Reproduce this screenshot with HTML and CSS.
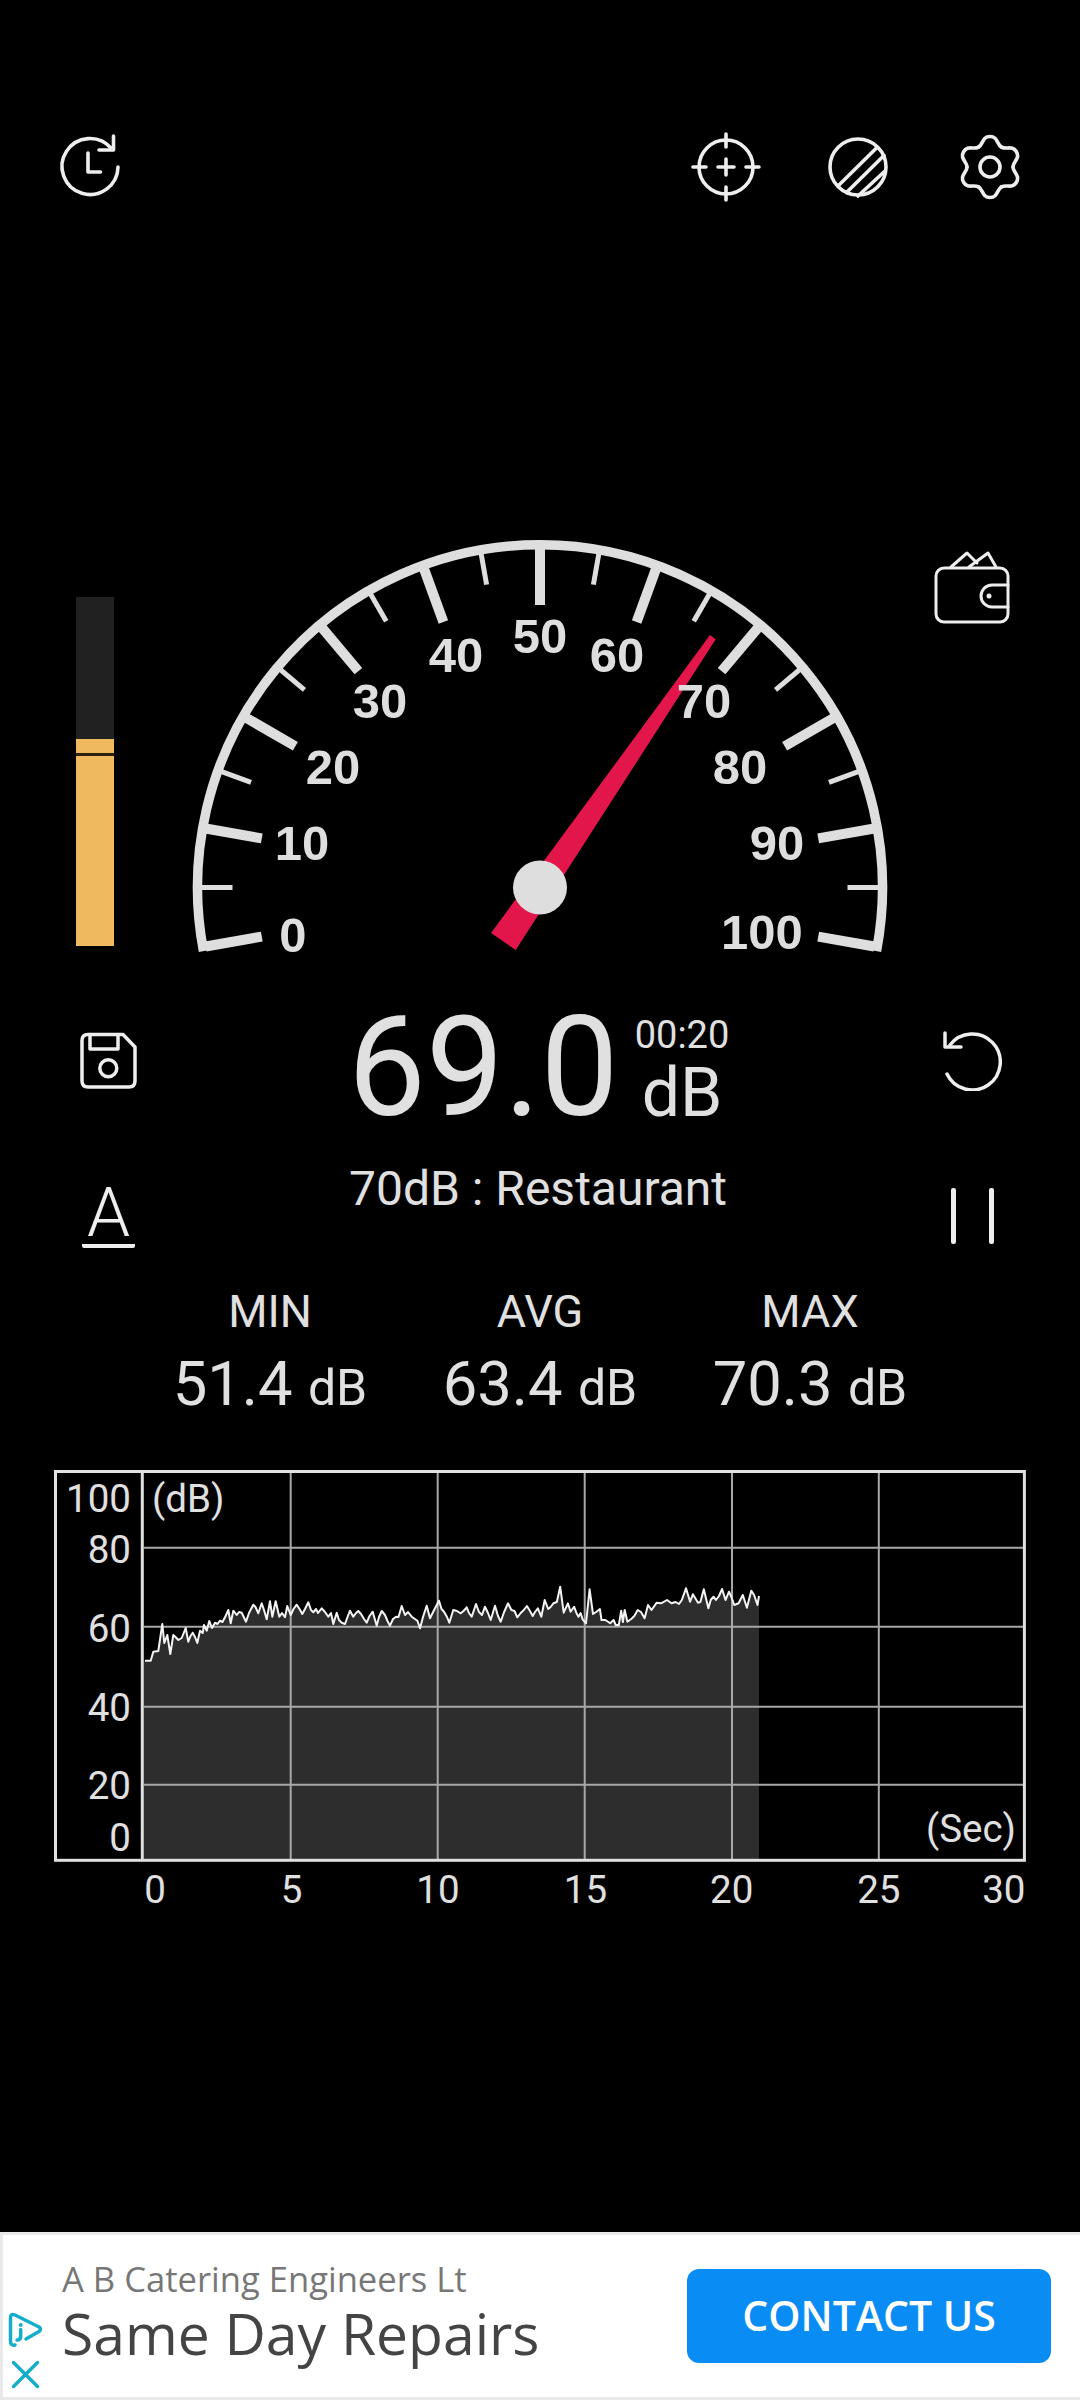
FILE: index.html
```html
<!DOCTYPE html>
<html>

<head>
    <title>Sound Meter</title>
    <meta charset='utf-8'>
    <link rel="stylesheet" href="styles.css">
</head>

<body>
    <div class='screen'>

        <!-- top icons -->
        <div class='topbar'>
            <svg class='icon' viewBox='-35 -35 70 70'>
                <path d='M21 -19 A28 28 0 1 0 28 0' />
                <path d='M23.500 -31 V-17 H9' />
                <path d='M-2 -14 V5 H10.500' />
            </svg>
            <div class='topbar-right'>
                <svg class='icon' viewBox='-35 -35 70 70'>
                    <circle cx='0' cy='0' r='27' />
                    <path d='M0 -33 V-20 M0 20 V33 M-33 0 H-20 M20 0 H33 M-8 0 H8 M0 -8 V8' />
                </svg>
                <svg class='icon' viewBox='-35 -35 70 70'>
                    <circle cx='0' cy='0' r='28' />
                    <path d='M-20 19 L18.500 -19 M-11.500 25.500 L26 -11.500 M0 29 L27 4' />
                </svg>
                <svg class='icon' viewBox='-35 -35 70 70'>
                    <defs>
                        <path id='lobe' d='M-11.500 -19.900 C-6.500 -22.800 -8 -30.500 0 -30.500 S6.500 -22.800 11.500 -19.900' />
                    </defs>
                    <use href='#lobe' />
                    <use href='#lobe' transform='rotate(60)' />
                    <use href='#lobe' transform='rotate(120)' />
                    <use href='#lobe' transform='rotate(180)' />
                    <use href='#lobe' transform='rotate(240)' />
                    <use href='#lobe' transform='rotate(300)' />
                    <circle cx='0' cy='0' r='10' />
                </svg>
            </div>
        </div>

        <!-- level bar, gauge, wallet -->
        <div class='meter'>
            <div class='level'>
                <div class='level-fill'>
                    <div class='level-peak'></div>
                </div>
            </div>

            <svg class='gauge' viewBox='180 530 720 440'>
                <path class='gauge-arc' d='M203.500 951.100 A342.500 342.500 0 1 1 876.500 951.100' />

                <g class='tick-major'>
                    <line x1='540' y1='605' x2='540' y2='548' transform='rotate(-100 540 887.500)' />
                    <line x1='540' y1='605' x2='540' y2='548' transform='rotate(-80 540 887.500)' />
                    <line x1='540' y1='605' x2='540' y2='548' transform='rotate(-60 540 887.500)' />
                    <line x1='540' y1='605' x2='540' y2='548' transform='rotate(-40 540 887.500)' />
                    <line x1='540' y1='605' x2='540' y2='548' transform='rotate(-20 540 887.500)' />
                    <line x1='540' y1='605' x2='540' y2='548' />
                    <line x1='540' y1='605' x2='540' y2='548' transform='rotate(20 540 887.500)' />
                    <line x1='540' y1='605' x2='540' y2='548' transform='rotate(40 540 887.500)' />
                    <line x1='540' y1='605' x2='540' y2='548' transform='rotate(60 540 887.500)' />
                    <line x1='540' y1='605' x2='540' y2='548' transform='rotate(80 540 887.500)' />
                    <line x1='540' y1='605' x2='540' y2='548' transform='rotate(100 540 887.500)' />
                </g>
                <g class='tick-minor'>
                    <line x1='540' y1='580' x2='540' y2='548' transform='rotate(-90 540 887.500)' />
                    <line x1='540' y1='580' x2='540' y2='548' transform='rotate(-70 540 887.500)' />
                    <line x1='540' y1='580' x2='540' y2='548' transform='rotate(-50 540 887.500)' />
                    <line x1='540' y1='580' x2='540' y2='548' transform='rotate(-30 540 887.500)' />
                    <line x1='540' y1='580' x2='540' y2='548' transform='rotate(-10 540 887.500)' />
                    <line x1='540' y1='580' x2='540' y2='548' transform='rotate(10 540 887.500)' />
                    <line x1='540' y1='580' x2='540' y2='548' transform='rotate(30 540 887.500)' />
                    <line x1='540' y1='580' x2='540' y2='548' transform='rotate(50 540 887.500)' />
                    <line x1='540' y1='580' x2='540' y2='548' transform='rotate(70 540 887.500)' />
                    <line x1='540' y1='580' x2='540' y2='548' transform='rotate(90 540 887.500)' />
                </g>

                <polygon class='needle' points='491,933 710,635 715.700,639.300 515.700,950' />
                <circle class='hub' cx='540' cy='887.500' r='27' />

                <g class='gauge-label'>
                    <text x='293' y='952'>0</text>
                    <text x='302' y='860'>10</text>
                    <text x='333' y='784'>20</text>
                    <text x='380' y='718'>30</text>
                    <text x='456' y='672'>40</text>
                    <text x='540' y='653'>50</text>
                    <text x='617' y='672'>60</text>
                    <text x='704' y='718'>70</text>
                    <text x='740' y='784'>80</text>
                    <text x='777' y='860'>90</text>
                    <text x='762' y='949'>100</text>
                </g>
            </svg>

            <svg class='icon-thin wallet' viewBox='932 548 80 80'>
                <rect x='936' y='568' width='72' height='54' rx='8' />
                <path d='M1008 585 H992 A11 11 0 0 0 992 607 H1008' />
                <path d='M951 567 L967 553 L977 563 M969 567 L988 553 L996 567' />
                <circle class='dot' cx='989' cy='596' r='2.500' />
            </svg>
        </div>

        <!-- current reading -->
        <div class='reading'>
            <svg class='icon side-icon save' viewBox='78 1031 60 60'>
                <path d='M88 1034.500 H123 L135 1047 V1081 Q135 1087 129 1087 H88 Q82 1087 82 1081 V1040.500 Q82 1034.500 88 1034.500 Z' />
                <path d='M90 1034.500 V1049 H118 V1034.500' />
                <circle cx='108.300' cy='1068.300' r='8.500' />
            </svg>
            <div class='reading-main'>
                <div class='reading-value'>69.0</div>
                <div class='reading-side'>
                    <div class='reading-time'>00:20</div>
                    <div class='reading-unit'>dB</div>
                </div>
            </div>
            <svg class='icon side-icon undo' viewBox='942 1030 60 60'>
                <path d='M947 1073 A28 28 0 1 0 950 1044' />
                <path d='M945 1032 V1046 H961' />
            </svg>
        </div>

        <div class='status'>
            <div class='weighting'>A</div>
            <div class='status-text'>70dB : Restaurant</div>
            <div class='pause'><span></span><span></span></div>
        </div>

        <!-- min avg max -->
        <div class='stats'>
            <div class='stat'>
                <div class='stat-label'>MIN</div>
                <div class='stat-value'>51.4 <small>dB</small></div>
            </div>
            <div class='stat'>
                <div class='stat-label'>AVG</div>
                <div class='stat-value'>63.4 <small>dB</small></div>
            </div>
            <div class='stat'>
                <div class='stat-label'>MAX</div>
                <div class='stat-value'>70.3 <small>dB</small></div>
            </div>
        </div>

        <!-- history chart -->
        <svg class='chart' viewBox='0 1460 1080 460'>
            <polygon class='chart-area' points='144,1860 144,1660.700 145,1660.700 150.700,1660.700 153.300,1651.700 158.300,1651 162.300,1624 164.300,1643 167.300,1635 170.300,1654 173.300,1635 175.500,1637 178.300,1640 181.700,1638 185.700,1628 188.300,1641.700 190.500,1636 192.700,1632.700 195,1637 197.300,1643 200,1630.700 202.700,1633 204,1625 206.700,1630.700 209.300,1621 212,1628 215,1622.700 217.500,1624 220,1620.700 222.500,1622 225,1617.300 228.300,1610 230.700,1623.300 233.300,1610.700 236.700,1615 239,1612 241.700,1612.700 246,1621.700 249,1613 253.300,1604.700 255.500,1607 258.300,1613.300 261.700,1603.300 264,1610 266.700,1619.300 270,1601.300 272.300,1616.700 275.700,1601.300 279.300,1616.700 282,1613 285,1617.300 287.300,1606 290.700,1615 293.500,1609 296.700,1604.700 299.500,1609 302.300,1614 305,1609 308.300,1602.300 311,1610 313.300,1612.300 316,1609 318,1613 321.700,1608.300 325,1612 328.300,1616.700 331,1613 333.300,1624 336.700,1612.700 339,1620 341.700,1622.700 345,1624 347.500,1617 350,1610.700 353.300,1616.700 356,1613 358.300,1611 361,1614 364,1619 366.700,1622.700 369.500,1616 372.700,1611.700 376.700,1625.700 379,1617 381.700,1611 385,1615 387.500,1621 390,1625.700 393,1619 396,1616.700 398.500,1617 401.700,1606 405,1615 408,1612 411.700,1616.700 415,1619 417.500,1621 420,1628.300 423,1617 426.700,1605.700 430,1618.300 435,1608.300 439,1600.700 441.500,1609 444,1611.700 447,1617 449.300,1622.700 453.300,1610 457,1611 460.700,1613.300 463.500,1611 466.700,1607.300 469,1613 471.700,1616.700 474,1610 476,1604 479,1612 482,1615 485,1606.700 488,1613 490.700,1620 495,1605.700 498,1616 500.700,1621.700 504.100,1612 508,1603.300 511.400,1610 514.500,1611 517.300,1617.300 520.700,1613 523.800,1610 526.900,1606 530,1611 532.700,1616 535,1612 537.900,1608.300 541.300,1616.700 544.700,1600 548.200,1609 550.600,1607 553.400,1603.300 556.800,1602 560.200,1586.700 563.700,1612.700 567.900,1603.300 570.600,1611.700 574.100,1606.700 576.400,1613 578.500,1616.700 580.600,1613 582.600,1619.300 586,1623.300 589.600,1589.300 593,1614 596.100,1612 599.900,1609 601.500,1620 605.400,1620 610.200,1623.300 613.600,1620 615.700,1625 618.800,1625 621.200,1610.700 622.900,1622 624.700,1610 627.400,1621.700 631.200,1619 634.300,1616 637.700,1610 641,1612 644.600,1618.300 648,1605 651.500,1610 656.700,1602.700 661.100,1603.300 667,1600 671.500,1603.300 675.600,1602 679,1604 681.800,1600 686,1588.300 690.100,1601.700 692.900,1594.300 698,1602.700 700.400,1602 703.800,1589.300 708.400,1608.300 710.700,1600 713.500,1596.700 715.900,1600 719,1596 722.100,1589 725.500,1600 729,1591.700 731.400,1597 734.200,1605 738.600,1603.300 742.800,1595 746.900,1607.700 751.300,1590.700 754.100,1595 757.500,1605 759,1596 759,1860' />

            <g class='chart-grid'>
                <line x1='290.700' y1='1473' x2='290.700' y2='1859' />
                <line x1='437.700' y1='1473' x2='437.700' y2='1859' />
                <line x1='584.700' y1='1473' x2='584.700' y2='1859' />
                <line x1='732' y1='1473' x2='732' y2='1859' />
                <line x1='878.800' y1='1473' x2='878.800' y2='1859' />
                <line x1='144' y1='1547.700' x2='1023' y2='1547.700' />
                <line x1='144' y1='1626.700' x2='1023' y2='1626.700' />
                <line x1='144' y1='1706.700' x2='1023' y2='1706.700' />
                <line x1='144' y1='1784.700' x2='1023' y2='1784.700' />
            </g>

            <polyline class='chart-trace' points='145,1660.700 150.700,1660.700 153.300,1651.700 158.300,1651 162.300,1624 164.300,1643 167.300,1635 170.300,1654 173.300,1635 175.500,1637 178.300,1640 181.700,1638 185.700,1628 188.300,1641.700 190.500,1636 192.700,1632.700 195,1637 197.300,1643 200,1630.700 202.700,1633 204,1625 206.700,1630.700 209.300,1621 212,1628 215,1622.700 217.500,1624 220,1620.700 222.500,1622 225,1617.300 228.300,1610 230.700,1623.300 233.300,1610.700 236.700,1615 239,1612 241.700,1612.700 246,1621.700 249,1613 253.300,1604.700 255.500,1607 258.300,1613.300 261.700,1603.300 264,1610 266.700,1619.300 270,1601.300 272.300,1616.700 275.700,1601.300 279.300,1616.700 282,1613 285,1617.300 287.300,1606 290.700,1615 293.500,1609 296.700,1604.700 299.500,1609 302.300,1614 305,1609 308.300,1602.300 311,1610 313.300,1612.300 316,1609 318,1613 321.700,1608.300 325,1612 328.300,1616.700 331,1613 333.300,1624 336.700,1612.700 339,1620 341.700,1622.700 345,1624 347.500,1617 350,1610.700 353.300,1616.700 356,1613 358.300,1611 361,1614 364,1619 366.700,1622.700 369.500,1616 372.700,1611.700 376.700,1625.700 379,1617 381.700,1611 385,1615 387.500,1621 390,1625.700 393,1619 396,1616.700 398.500,1617 401.700,1606 405,1615 408,1612 411.700,1616.700 415,1619 417.500,1621 420,1628.300 423,1617 426.700,1605.700 430,1618.300 435,1608.300 439,1600.700 441.500,1609 444,1611.700 447,1617 449.300,1622.700 453.300,1610 457,1611 460.700,1613.300 463.500,1611 466.700,1607.300 469,1613 471.700,1616.700 474,1610 476,1604 479,1612 482,1615 485,1606.700 488,1613 490.700,1620 495,1605.700 498,1616 500.700,1621.700 504.100,1612 508,1603.300 511.400,1610 514.500,1611 517.300,1617.300 520.700,1613 523.800,1610 526.900,1606 530,1611 532.700,1616 535,1612 537.900,1608.300 541.300,1616.700 544.700,1600 548.200,1609 550.600,1607 553.400,1603.300 556.800,1602 560.200,1586.700 563.700,1612.700 567.900,1603.300 570.600,1611.700 574.100,1606.700 576.400,1613 578.500,1616.700 580.600,1613 582.600,1619.300 586,1623.300 589.600,1589.300 593,1614 596.100,1612 599.900,1609 601.500,1620 605.400,1620 610.200,1623.300 613.600,1620 615.700,1625 618.800,1625 621.200,1610.700 622.900,1622 624.700,1610 627.400,1621.700 631.200,1619 634.300,1616 637.700,1610 641,1612 644.600,1618.300 648,1605 651.500,1610 656.700,1602.700 661.100,1603.300 667,1600 671.500,1603.300 675.600,1602 679,1604 681.800,1600 686,1588.300 690.100,1601.700 692.900,1594.300 698,1602.700 700.400,1602 703.800,1589.300 708.400,1608.300 710.700,1600 713.500,1596.700 715.900,1600 719,1596 722.100,1589 725.500,1600 729,1591.700 731.400,1597 734.200,1605 738.600,1603.300 742.800,1595 746.900,1607.700 751.300,1590.700 754.100,1595 757.500,1605 759,1596' />

            <rect class='chart-frame' x='55.500' y='1471.500' width='968.900' height='388.800' />
            <line class='chart-axis' x1='142.300' y1='1471.500' x2='142.300' y2='1860' />

            <g class='chart-label chart-label-y'>
                <text x='131' y='1512'>100</text>
                <text x='131' y='1563'>80</text>
                <text x='131' y='1642'>60</text>
                <text x='131' y='1721'>40</text>
                <text x='131' y='1799'>20</text>
                <text x='131' y='1851'>0</text>
            </g>
            <g class='chart-label chart-label-x'>
                <text x='155' y='1903'>0</text>
                <text x='291.500' y='1903'>5</text>
                <text x='438' y='1903'>10</text>
                <text x='585.500' y='1903'>15</text>
                <text x='731.700' y='1903'>20</text>
                <text x='878.800' y='1903'>25</text>
                <text x='1003.800' y='1903'>30</text>
            </g>
            <text class='chart-label' x='152' y='1512'>(dB)</text>
            <text class='chart-label chart-label-y' x='1016' y='1842'>(Sec)</text>
        </svg>

        <!-- ad banner -->
        <div class='ad'>
            <svg class='ad-icons' viewBox='3 2305 50 90'>
                <path d='M15 2345 Q10.500 2346 10.500 2341 V2318 Q10.500 2313 15 2315 L39 2327 Q42 2329.300 39 2331.500 L26 2339' />
                <path d='M20.700 2329.500 V2336 Q20.700 2340 17 2340' />
                <circle class='ad-dot' cx='20.700' cy='2325' r='2' />
                <path d='M13.500 2362.500 L37.500 2386.500 M37.500 2362.500 L13.500 2386.500' />
            </svg>
            <div class='ad-text'>
                <div class='ad-name'>A B Catering Engineers Lt</div>
                <div class='ad-title'>Same Day Repairs</div>
            </div>
            <div class='ad-button'>CONTACT US</div>
        </div>
    </div>
</body>

</html>
```

FILE: styles.css
```css
body {
    margin: 0;
    background: #000;
    font-family: Roboto, sans-serif;
    color: #e0e0e0
}

.screen {
    width: 1080px;
    height: 2400px;
    display: flex;
    flex-direction: column;
    overflow: hidden
}

/* icons */
.icon,
.icon-thin {
    fill: none;
    stroke: #eee;
    stroke-width: 3.600;
    stroke-linecap: round;
    stroke-linejoin: round;
    flex: none
}

.icon {
    width: 70px;
    height: 70px
}

.icon-thin {
    stroke-width: 3
}

.side-icon {
    width: 60px;
    height: 60px;
    stroke-width: 3.500
}

/* top bar */
.topbar {
    display: flex;
    justify-content: space-between;
    padding: 132px 55px 0
}

.topbar-right {
    display: flex;
    gap: 62px
}

/* gauge row */
.meter {
    display: flex;
    height: 440px;
    margin-top: 328px;
    padding-left: 76px
}

.level {
    display: flex;
    flex-direction: column;
    justify-content: flex-end;
    width: 38px;
    height: 349px;
    margin-top: 67px;
    background: #212121
}

.level-fill {
    height: 193px;
    padding-top: 14px;
    background: #eeb95f
}

.level-peak {
    height: 3px;
    background: #2a2111
}

.gauge {
    width: 720px;
    height: 440px;
    margin-left: 66px;
    flex: none
}

.gauge-arc {
    fill: none;
    stroke: #dedede;
    stroke-width: 9.500
}

.tick-major line {
    stroke: #dedede;
    stroke-width: 10
}

.tick-minor line {
    stroke: #dedede;
    stroke-width: 5
}

.needle {
    fill: #e2164a
}

.hub {
    fill: #dedede
}

.gauge-label text {
    font-family: "Liberation Sans", sans-serif;
    font-weight: bold;
    font-size: 49px;
    text-anchor: middle;
    fill: #dedede
}

.wallet {
    width: 80px;
    height: 80px;
    margin: 18px 0 0 32px
}

.dot {
    fill: #eee;
    stroke: none
}

/* reading */
.reading {
    display: grid;
    grid-template-columns: 1fr auto 1fr;
    margin-top: 31px;
    padding: 0 78px
}

.save,
.undo {
    margin-top: 30px
}

.undo {
    justify-self: end
}

.reading-main {
    display: flex;
    gap: 16px
}

.reading-value {
    margin-left: -3px;
    font-size: 139px;
    line-height: 134px
}

.reading-side {
    display: flex;
    flex-direction: column;
    align-items: center;
    margin-top: 15px
}

.reading-time {
    font-size: 38px;
    line-height: 38px
}

.reading-unit {
    font-size: 68px;
    line-height: 66px;
    margin-top: 6px
}

/* status */
.status {
    display: grid;
    grid-template-columns: 1fr auto 1fr;
    margin-top: 31px;
    padding: 0 86px 0 82px
}

.weighting {
    width: 53px;
    margin-top: 22px;
    padding-bottom: 7px;
    border-bottom: 4px solid #eee;
    border-radius: 2px;
    text-align: center;
    font-size: 69px;
    font-weight: 300;
    line-height: 49px;
    color: #eee
}

.status-text {
    font-size: 48px;
    line-height: 46px
}

.pause {
    display: flex;
    justify-self: end;
    gap: 33px;
    margin-top: 22px
}

.pause span {
    width: 5px;
    height: 56px;
    border-radius: 2px;
    background: #eee
}

/* stats */
.stats {
    display: grid;
    grid-template-columns: repeat(3, 270px);
    margin-top: 42px;
    padding-left: 135px;
    text-align: center
}

.stat-label {
    font-size: 45px;
    line-height: 44px
}

.stat-value {
    margin-top: 20px;
    font-size: 61.500px;
    line-height: 60px
}

.stat-value small {
    font-size: 50px;
    line-height: 0
}

/* chart */
.chart {
    width: 1080px;
    height: 460px;
    margin-top: 46px;
    flex: none
}

.chart-area {
    fill: #2d2d2d
}

.chart-grid line {
    stroke: #a8a8a8;
    stroke-width: 2
}

.chart-trace {
    fill: none;
    stroke: #f4f4f4;
    stroke-width: 2;
    stroke-linejoin: round
}

.chart-frame {
    fill: none;
    stroke: #e0e0e0;
    stroke-width: 3
}

.chart-axis {
    stroke: #e0e0e0;
    stroke-width: 3
}

.chart-label {
    font-size: 38.500px;
    fill: #e0e0e0
}

.chart-label-y {
    text-anchor: end
}

.chart-label-x {
    text-anchor: middle
}

/* ad */
.ad {
    display: flex;
    box-sizing: border-box;
    height: 168px;
    margin-top: auto;
    border: 3px solid #e8eaea;
    border-right: 0;
    background: #fff;
    font-family: "Open Sans", sans-serif
}

.ad-icons {
    width: 50px;
    height: 90px;
    margin-top: 70px;
    fill: none;
    stroke: #14aecb;
    stroke-width: 3.500;
    stroke-linecap: round;
    stroke-linejoin: round;
    flex: none
}

.ad-dot {
    fill: #14aecb;
    stroke: none
}

.ad-text {
    margin-left: 9px;
    padding-top: 24px
}

.ad-name {
    font-size: 34.600px;
    line-height: 40px;
    color: #777
}

.ad-title {
    margin-top: 2px;
    font-size: 57px;
    font-weight: 500;
    line-height: 64px;
    color: #444
}

.ad-button {
    width: 364px;
    height: 94px;
    margin: 34px 29px 0 auto;
    border-radius: 12px;
    background: #0a8cf5;
    color: #fff;
    text-align: center;
    font-size: 41px;
    font-weight: 600;
    line-height: 92px
}
```
